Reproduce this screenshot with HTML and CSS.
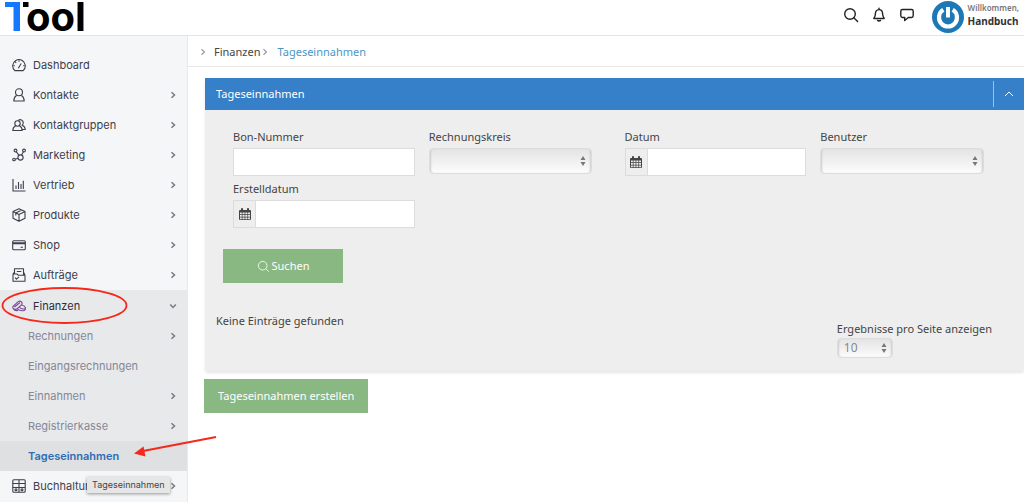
FILE: index.html
```html
<!DOCTYPE html>
<html lang="de">
<head>
<meta charset="utf-8">
<meta name="viewport" content="width=device-width, initial-scale=1">
<title>Tageseinnahmen</title>
<link rel="stylesheet" href="styles.css">
</head>
<body>
<svg class="defs" aria-hidden="true">
  <symbol id="chev" viewBox="0 0 8 8"><path d="M2.500 1.200 5.500 4 2.500 6.800"/></symbol>
  <symbol id="search" viewBox="0 0 16 16"><circle cx="7" cy="7" r="5.300"/><path d="M10.800 10.800 14.600 14.400"/></symbol>
  <symbol id="calendar" viewBox="0 0 12 12"><path fill="#444" fill-rule="evenodd" d="M1 2h1V.8Q2 0 3 0t1 .8V2h4V.8Q8 0 9 0t1 .8V2h1q1 0 1 1v8q0 1-1 1H1q-1 0-1-1V3q0-1 1-1ZM1 4.500v1.800h1.800V4.500Zm2.500 0v1.800h2.100V4.500Zm2.800 0v1.800h2.100V4.500Zm2.800 0v1.800H11V4.500ZM1 7v1.800h1.800V7Zm2.500 0v1.800h2.100V7Zm2.800 0v1.800h2.100V7Zm2.800 0v1.800H11V7ZM1 9.500v1.700h1.800V9.500Zm2.500 0v1.700h2.100V9.500Zm2.800 0v1.700h2.100V9.500Zm2.800 0v1.700H11V9.500Z"/></symbol>
</svg>

<header class="topbar">
  <a class="logo" href="#" aria-label="Tool">
    <svg width="24" height="30" viewBox="0 0 24 30" aria-hidden="true"><path fill="#1677ff" d="M0 0h15v29H8.500V5H0Z"/><path fill="#000" d="M18 0h5.500v5H18Z"/></svg>
    <span class="logo-text">ool</span>
  </a>
  <div class="tools">
    <button class="tool" aria-label="Suche"><svg width="16" height="16"><use href="#search"/></svg></button>
    <button class="tool" aria-label="Benachrichtigungen"><svg width="16" height="16" viewBox="0 0 16 16"><path d="M8 2.600c2.600 0 3.600 1.900 3.600 4.200 0 2.400.6 3.400 1.600 4.700H2.800c1-1.300 1.600-2.300 1.600-4.700C4.400 4.500 5.400 2.600 8 2.600ZM8 1.200v1.400M6.500 13.400q1.500 1.200 3 0"/></svg></button>
    <button class="tool" aria-label="Nachrichten"><svg width="16" height="16" viewBox="0 0 16 16"><path d="M3.500 2.500h9q1.700 0 1.700 1.700v4.600q0 1.700-1.700 1.700H9.300L5.700 13.500v-3H3.500q-1.700 0-1.700-1.700V4.200q0-1.700 1.700-1.700Z"/></svg></button>
  </div>
  <a class="user" href="#">
    <svg width="32" height="32" viewBox="0 0 32 32" aria-hidden="true"><circle cx="16" cy="16" r="16" fill="#1c79b5"/><path d="M11.300 8.800A9 9 0 1 0 20.700 8.800" fill="none" stroke="#fff" stroke-width="4.200"/><path d="M16 6v10.500" stroke="#fff" stroke-width="4"/></svg>
    <span class="user-text"><small>Willkommen,</small><strong>Handbuch</strong></span>
  </a>
</header>

<div class="layout">
  <nav class="sidebar" aria-label="Hauptmenü">
    <a class="item" href="#"><svg class="ico" viewBox="0 0 14 14"><path d="M2.800 12.600C-.5 9.500.3 5 3.500 2.800a6 6 0 0 1 7 0C13.700 5 14.500 9.500 11.200 12.600ZM6.300 10.200 9.200 5.500M7 2.200v1.500M2.800 7.800H1.500M12.500 7.800h-1.300M4.200 4.800l-.9-.9"/></svg><span>Dashboard</span></a>
    <a class="item" href="#"><svg class="ico" viewBox="0 0 14 14"><circle cx="7" cy="4.300" r="3.500"/><path d="M4.500 7.500C2.500 8.800 1.800 10.500 1.800 13h10.400c0-2.500-.7-4.200-2.700-5.500"/></svg><span>Kontakte</span><svg class="chev"><use href="#chev"/></svg></a>
    <a class="item" href="#"><svg class="ico" viewBox="0 0 14 14"><circle cx="5.500" cy="5.500" r="2.700"/><path d="M3.700 7.700C1.600 8.700.8 10.300.8 12.500h9.400c0-2.200-.8-3.800-2.900-4.800M6.200 2.500a2.900 2.900 0 1 1 3.900 4.800c2.200.9 3.100 2.200 3.200 4.200h-3"/></svg><span>Kontaktgruppen</span><svg class="chev"><use href="#chev"/></svg></a>
    <a class="item" href="#"><svg class="ico" viewBox="0 0 14 14"><circle cx="8.500" cy="9.500" r="2.600"/><circle cx="3.500" cy="2.500" r="1.400"/><circle cx="12" cy="2.500" r="1.400"/><circle cx="2" cy="11.500" r="1.300"/><path d="M4.200 3.700 7 7.300M11.500 3.800 9.500 7M3.300 11.200 6 10.300"/></svg><span>Marketing</span><svg class="chev"><use href="#chev"/></svg></a>
    <a class="item" href="#"><svg class="ico" viewBox="0 0 14 14"><path d="M1 1v12h12.500M4 11V7.500M6.500 11V4M9 11V6M11.300 11V2.800"/></svg><span>Vertrieb</span><svg class="chev"><use href="#chev"/></svg></a>
    <a class="item" href="#"><svg class="ico" viewBox="0 0 14 14"><path d="M7 .8 13 3.500v6.700L7 13.300 1 10.200V3.500ZM1 3.500l6 3 6-3M7 6.500v6.800M9.800 2 3.800 5v2.500"/></svg><span>Produkte</span><svg class="chev"><use href="#chev"/></svg></a>
    <a class="item" href="#"><svg class="ico" viewBox="0 0 14 14"><rect x=".7" y="2.700" width="12.600" height="9" rx="1"/><path d="M.7 4.800h12.600M.7 5.800h12.600M8.500 9.300h2.500"/></svg><span>Shop</span><svg class="chev"><use href="#chev"/></svg></a>
    <a class="item" href="#"><svg class="ico" viewBox="0 0 14 14"><path d="M2.500 6V.8h9V7M1 6h4l1.200 1.200H13v6H1ZM4.800 3.500h4.500M3 9.700l1.500 1.500L7 8.800M1 6l1.500-2M13 7.200 11.500 4"/></svg><span>Aufträge</span><svg class="chev"><use href="#chev"/></svg></a>
    <div class="group">
      <a class="item current" href="#"><svg class="ico violet" viewBox="0 0 14 14"><path d="M1 7.500 6.200 2.600q2-1.200 3.500.5 1 1.700-.5 3L5.500 9.500q-2.200 1.500-4 .2-1.300-1.200-.5-2.200ZM2.500 8 8 3.500M9.500 6q3 .3 4 2.800.3 2.700-2.500 2.900-3.700.2-6-1.800M7.500 8.300q1.500 2.200 5.500 1.500M1.500 10q1 2 4.500 1.500"/></svg><span>Finanzen</span><svg class="chev down"><use href="#chev"/></svg></a>
      <a class="sub" href="#"><span>Rechnungen</span><svg class="chev"><use href="#chev"/></svg></a>
      <a class="sub" href="#"><span>Eingangsrechnungen</span></a>
      <a class="sub" href="#"><span>Einnahmen</span><svg class="chev"><use href="#chev"/></svg></a>
      <a class="sub" href="#"><span>Registrierkasse</span><svg class="chev"><use href="#chev"/></svg></a>
      <a class="sub active" href="#" aria-current="page"><span>Tageseinnahmen</span></a>
    </div>
    <a class="item" href="#"><svg class="ico" viewBox="0 0 14 14"><rect x=".8" y=".8" width="12.400" height="12.400" rx="1"/><path d="M.8 4.500h12.400M7 .8v12.400M.8 8.500h12.400"/><circle cx="4" cy="10.800" r="1"/><circle cx="10" cy="10.800" r="1"/></svg><span>Buchhaltung</span><svg class="chev"><use href="#chev"/></svg></a>
  </nav>

  <main class="main">
    <nav class="crumbs" aria-label="Brotkrumen">
      <svg class="chev"><use href="#chev"/></svg><a href="#">Finanzen</a><svg class="chev"><use href="#chev"/></svg><a class="here" href="#">Tageseinnahmen</a>
    </nav>
    <section class="panel">
      <div class="panel-head">
        <h1>Tageseinnahmen</h1>
        <button class="collapse" aria-label="Einklappen"><svg width="10" height="6" viewBox="0 0 10 6"><path d="M1 5l4-4 4 4"/></svg></button>
      </div>
      <form class="filters">
        <div class="fields">
          <div class="field"><label for="bon">Bon-Nummer</label><input id="bon" type="text"></div>
          <div class="field"><label for="kreis">Rechnungskreis</label><select id="kreis"><option></option></select></div>
          <div class="field"><label for="datum">Datum</label><div class="date"><span class="addon"><svg width="12" height="12"><use href="#calendar"/></svg></span><input id="datum" type="text"></div></div>
          <div class="field"><label for="benutzer">Benutzer</label><select id="benutzer"><option></option></select></div>
          <div class="field"><label for="erstellt">Erstelldatum</label><div class="date"><span class="addon"><svg width="12" height="12"><use href="#calendar"/></svg></span><input id="erstellt" type="text"></div></div>
        </div>
        <button class="btn search" type="button"><svg width="13" height="13"><use href="#search"/></svg>Suchen</button>
      </form>
      <div class="results">
        <p>Keine Einträge gefunden</p>
        <div class="per-page"><label for="pp">Ergebnisse pro Seite anzeigen</label><select id="pp"><option>10</option></select></div>
      </div>
    </section>
    <button class="btn create" type="button">Tageseinnahmen erstellen</button>
  </main>
</div>

<div class="tooltip" role="tooltip">Tageseinnahmen</div>
<svg class="marks" width="230" height="200" viewBox="0 0 230 200" aria-hidden="true">
  <ellipse cx="64.500" cy="25.500" rx="62" ry="17.500" fill="none" stroke="#f5281b" stroke-width="1.800"/>
  <path d="M216 157 143 171" stroke="#f5281b" stroke-width="2"/>
  <path d="M134 173.500 143.500 166.500 145.500 176.500Z" fill="#f5281b"/>
</svg>
</body>
</html>
```
FILE: styles.css
```css
* { box-sizing: border-box; }

body {
  position: relative;
  display: flex;
  flex-direction: column;
  height: 100vh;
  margin: 0;
  overflow: hidden;
  background: #fff;
  color: #444;
  font: 11px/18px "Noto Sans", sans-serif;
}

a { color: inherit; text-decoration: none; }
button { padding: 0; border: 0; background: none; font: inherit; }
svg { flex: none; }
symbol, .tool path { fill: none; }

.defs { position: absolute; width: 0; height: 0; }

.topbar {
  display: flex;
  flex: none;
  align-items: center;
  height: 36px;
  padding: 0 5px 2px;
  border-bottom: 1px solid #e4e4e6;
}

.logo { display: flex; align-items: center; color: #000; }
.logo-text {
  margin-left: -3px;
  font: 700 40px/48px Inter, sans-serif;
}

.tools { display: flex; gap: 12px; margin-left: auto; padding-bottom: 3px; }
.tool {
  display: flex;
  stroke: #222;
  stroke-width: 1.4;
  stroke-linecap: round;
  stroke-linejoin: round;
}

.user { display: flex; gap: 4px; margin-left: 17px; }
.user-text { display: flex; flex-direction: column; }
.user small { font: 600 8px/13px "Noto Sans", sans-serif; color: #777; }
.user strong { font: 700 10px/15px "Noto Sans", sans-serif; color: #333; }

.layout { display: flex; flex: 1; min-height: 0; }

.sidebar {
  flex: none;
  width: 188px;
  padding-top: 14px;
  background: #f5f6f8;
  border-right: 1px solid #e8e9eb;
  color: #3d3e4a;
  font: 11px/30px Inter, sans-serif;
}

.item, .sub {
  display: flex;
  align-items: center;
  height: 30px;
  padding: 0 10px 0 12px;
}
.item { gap: 7px; }
.sub { padding-left: 28px; color: #858797; }

.ico {
  width: 14px;
  height: 14px;
  fill: none;
  stroke: #3d3e4a;
  stroke-width: 1.1;
  stroke-linejoin: round;
}
.violet { stroke: #7d4a9c; }

.chev {
  width: 8px;
  height: 8px;
  margin-left: auto;
  stroke: #777984;
  stroke-width: 1.5;
}
.down { transform: rotate(90deg); }

.group { padding: 1px 0 0; background: #e8e9eb; }
.current { color: #2d2e38; }
.active { background: #dfe0e2; color: #2e6db4; font-weight: 600; }

.main { flex: 1; min-width: 0; }

.crumbs {
  display: flex;
  align-items: center;
  height: 31px;
  padding: 1px 0 0 11px;
  border-bottom: 1px solid #e8e8ea;
}
.crumbs .chev { margin: 0; stroke: #9a9aa0; stroke-width: 1.2; }
.crumbs a { margin-left: 7px; }
.crumbs .here { margin-left: 9px; color: #4b96c9; }

.panel {
  margin: 11px 0 0 17px;
  background: #eee;
  border-radius: 3px;
  box-shadow: 0 2px 3px rgba(0, 0, 0, 0.1);
}

.panel-head {
  display: flex;
  align-items: center;
  height: 32px;
  background: #367fc9;
  color: #fff;
}
.panel-head h1 { flex: 1; margin: 0; padding-left: 11px; font: inherit; }
.collapse {
  display: grid;
  place-items: center;
  width: 31px;
  height: 26px;
  border-left: 1px solid #9cc2e8;
  fill: none;
  stroke: #fff;
}

.filters { padding: 18px 22px 0 28px; }
.fields {
  display: grid;
  grid-template-columns: repeat(4, 1fr);
  gap: 4px 14px;
}
.field label { display: block; height: 20px; }

input, select {
  display: block;
  margin: 0;
  font: inherit;
  color: #444;
}
input {
  width: 100%;
  height: 28px;
  padding: 0 6px;
  border: 1px solid #dcdcdc;
  border-radius: 0;
  background: #fff;
}

select {
  width: 90%;
  height: 26px;
  padding: 0 8px;
  appearance: none;
  border: 1px solid #ddd;
  border-radius: 4px;
  background:
    url("data:image/svg+xml,%3Csvg xmlns='http://www.w3.org/2000/svg' width='6' height='10'%3E%3Cpath fill='%23777' d='M.5 4 3 0l2.500 4ZM.5 6 3 10l2.500-4Z'/%3E%3C/svg%3E") no-repeat right 5px center,
    linear-gradient(#e4e4e4, #fcfcfc);
  box-shadow: inset 2px 0 2px -1px #ccc, inset -2px 0 2px -1px #ccc;
}

.date { display: flex; }
.addon {
  display: grid;
  flex: none;
  place-items: center;
  width: 22px;
  border: 1px solid #dcdcdc;
  border-right: 0;
}

.btn {
  display: flex;
  align-items: center;
  justify-content: center;
  height: 34px;
  background: #8ab883;
  color: #fff;
}
.search {
  gap: 2px;
  width: 120px;
  margin: 21px 0 0 -10px;
  stroke: #fff;
  fill: none;
}
.create { margin: 8px 0 0 16px; padding: 0 14px; }

.results {
  display: flex;
  justify-content: space-between;
  padding: 29px 32px 13px 11px;
}
.results p { margin: 0; }
.per-page { padding-top: 8px; }
.per-page label { display: block; }
.per-page select { width: 56px; height: 20px; padding: 0 6px; color: #888; font-size: 12px; line-height: 18px; }

.tooltip {
  position: absolute;
  top: 477px;
  left: 87px;
  padding: 0 5px;
  background: #e6e6e7;
  box-shadow: 0 1px 3px rgba(0, 0, 0, 0.4);
  color: #444;
  font: 9px/16px Inter, sans-serif;
}

.marks { position: absolute; top: 280px; left: 0; pointer-events: none; }
```
